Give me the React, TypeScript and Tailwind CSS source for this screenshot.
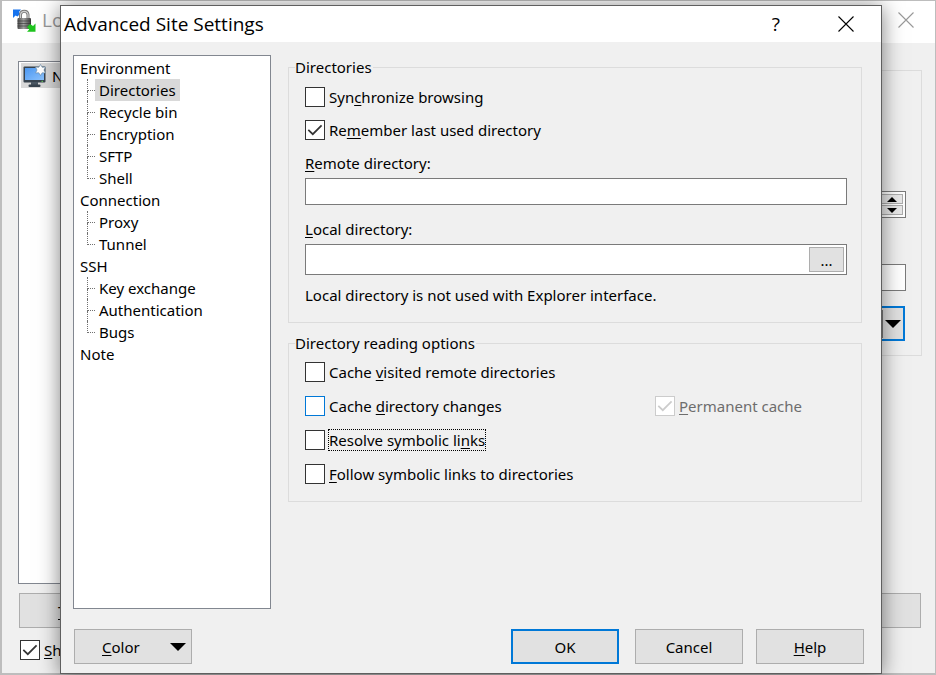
import React from 'react';

type TreeGroup = { name: string; children: string[] };

const TREE: TreeGroup[] = [
  { name: 'Environment', children: ['Directories', 'Recycle bin', 'Encryption', 'SFTP', 'Shell'] },
  { name: 'Connection', children: ['Proxy', 'Tunnel'] },
  { name: 'SSH', children: ['Key exchange', 'Authentication', 'Bugs'] },
  { name: 'Note', children: [] },
];

// "&" marks the accelerator letter, as in native dialog resources
const Accel: React.FC<{ text: string }> = ({ text }) => {
  const i = text.indexOf('&');
  if (i < 0) return <>{text}</>;
  return (
    <>
      {text.slice(0, i)}
      <u className="underline decoration-1 underline-offset-2 [text-decoration-skip-ink:none]">{text[i + 1]}</u>
      {text.slice(i + 2)}
    </>
  );
};

const Check: React.FC<{
  id: string;
  text: string;
  checked?: boolean;
  disabled?: boolean;
  hot?: boolean;
  focused?: boolean;
}> = ({ id, text, checked, disabled, hot, focused }) => (
  <div className="flex items-center gap-[3px]">
    <span className="relative size-5 shrink-0">
      <input
        id={id}
        type="checkbox"
        defaultChecked={checked}
        disabled={disabled}
        className={`peer block size-5 appearance-none border bg-white ${disabled ? 'border-[#cccccc]' : hot ? 'border-[#0078d7]' : 'border-[#333333]'}`}
      />
      <svg
        viewBox="0 0 20 20"
        className={`pointer-events-none absolute inset-0 hidden size-5 peer-checked:block ${disabled ? 'text-[#cccccc]' : 'text-[#333333]'}`}
      >
        <path d="M3.3 9.8 L7.8 14.2 L16.6 5.4" fill="none" stroke="currentColor" strokeWidth="1.7" />
      </svg>
    </span>
    <label
      htmlFor={id}
      className={`whitespace-nowrap border border-dotted leading-5 ${focused ? 'border-black' : 'border-transparent'} ${disabled ? 'text-[#6d6d6d]' : ''}`}
    >
      <Accel text={text} />
    </label>
  </div>
);

const Group: React.FC<{ title: string; children: React.ReactNode }> = ({ title, children }) => (
  <fieldset className="min-w-0 border border-[#dcdcdc] px-1.5">
    <legend className="pr-px leading-[22px]">{title}</legend>
    <div className="pl-2.5 pr-2">{children}</div>
  </fieldset>
);

const PushButton: React.FC<{ text: string; primary?: boolean }> = ({ text, primary }) => (
  <button
    type="button"
    className={`h-[35px] w-[108px] bg-[#e1e1e1] ${primary ? 'border-2 border-[#0078d7]' : 'border border-[#adadad]'}`}
  >
    <Accel text={text} />
  </button>
);

const Cross: React.FC<{ className: string }> = ({ className }) => (
  <svg viewBox="0 0 16 16" className={`size-4 ${className}`}>
    <path d="M0.5 0.5 L15.5 15.5 M15.5 0.5 L0.5 15.5" stroke="currentColor" strokeWidth="1.1" fill="none" />
  </svg>
);

const Triangle: React.FC<{ className: string; up?: boolean }> = ({ className, up }) => (
  <svg viewBox="0 0 16 8" preserveAspectRatio="none" className={className}>
    <path d={up ? 'M0 8 L8 0 L16 8 Z' : 'M0 0 H16 L8 8 Z'} fill="#000" />
  </svg>
);

const LockLogo: React.FC = () => (
  <svg viewBox="0 0 24 24" className="size-6">
    <defs>
      <linearGradient id="lockBody" x1="0" x2="1">
        <stop offset="0" stopColor="#4a4a4a" />
        <stop offset="0.45" stopColor="#a0a0a0" />
        <stop offset="1" stopColor="#3c3c3c" />
      </linearGradient>
    </defs>
    <path d="M1 1.5 H9 L7 4 L8 6 L5.5 8.5 L3.5 7.5 L1 10 Z" fill="#1673ee" />
    <path d="M8.5 11 V6.5 A3.8 3.8 0 0 1 16 6.5 V11" fill="none" stroke="#777" strokeWidth="3" />
    <path d="M8.5 11 V6.5 A3.8 3.8 0 0 1 16 6.5 V11" fill="none" stroke="#d0d0d0" strokeWidth="1.2" />
    <rect x="5.5" y="10" width="13.5" height="11" rx="1" fill="url(#lockBody)" />
    <path d="M5.5 13 H19 M5.5 15.5 H19 M5.5 18 H19" stroke="#333" strokeWidth="0.6" />
    <path d="M23.5 15.5 V23.8 H15 L17.2 21.5 L15 19 L18 16 L21 18 Z" fill="#1fc41f" />
  </svg>
);

const MonitorIcon: React.FC = () => (
  <svg viewBox="0 0 24 24" className="size-6 shrink-0">
    <defs>
      <linearGradient id="screen" x1="0" y1="0" x2="1" y2="1">
        <stop offset="0" stopColor="#4c97f0" />
        <stop offset="1" stopColor="#8cc4ff" />
      </linearGradient>
    </defs>
    <rect x="0.5" y="2.5" width="22" height="16" rx="1" fill="#38444f" />
    <rect x="2" y="4" width="19" height="12" fill="url(#screen)" />
    <rect x="8" y="18" width="7" height="3" fill="#4a5763" />
    <rect x="5.5" y="20.5" width="12" height="2.5" rx="1" fill="#38444f" />
    <rect x="18.5" y="16.8" width="1.5" height="1" fill="#6fdc5a" />
    <path
      d="M17.5 0.5 L19.2 3.2 L22.5 3 L21 6 L22.5 9 L19.2 8.8 L17.5 11.5 L15.8 8.8 L12.5 9 L14 6 L12.5 3 L15.8 3.2 Z"
      fill="#fff"
      stroke="#6b8fae"
      strokeWidth="0.7"
    />
  </svg>
);

const SettingsTree: React.FC = () => (
  <ul className="w-[198px] shrink-0 border border-[#828790] bg-white pl-1.5 pt-px leading-[22px]">
    {TREE.map(group => (
      <li key={group.name}>
        <span>{group.name}</span>
        <ul className="pl-[7px]">
          {group.children.map((name, i) => (
            <li key={name} className="flex h-[22px]">
              <span className="flex w-2 flex-col">
                <span className="h-3 border-b border-l border-dotted border-[#707070]" />
                {i < group.children.length - 1 && <span className="flex-1 border-l border-dotted border-[#707070]" />}
              </span>
              <span className={`px-1 ${name === 'Directories' ? 'bg-[#d9d9d9]' : ''}`}>{name}</span>
            </li>
          ))}
        </ul>
      </li>
    ))}
  </ul>
);

const LoginWindow: React.FC = () => (
  <div className="flex flex-1 flex-col bg-[#f0f0f0]">
    <div className="flex h-[42px] items-start justify-between bg-white pl-2.5 pr-[21px] pt-[7px]">
      <div className="flex items-center gap-1.5">
        <LockLogo />
        <span className="font-['Open_Sans',sans-serif] text-[19px] leading-6 text-[#999999]">Lo</span>
      </div>
      <button type="button" aria-label="Close login" className="pt-1">
        <Cross className="text-[#999999]" />
      </button>
    </div>

    <div className="flex flex-1 justify-between pl-4 pr-[13px] pt-[18px]">
      <div className="w-1/4 border border-[#828790] bg-white">
        <div className="ml-0.5 mt-px flex h-[25px] items-center gap-[5px] bg-[#d9d9d9] pl-0.5">
          <MonitorIcon />
          <span>N</span>
        </div>
      </div>
      <div className="mt-[9px] flex h-[286px] w-1/4 flex-col items-end border border-[#dcdcdc] pr-[15px] pt-[120px]">
        <div className="flex h-[27px] w-16 flex-col items-end gap-px border border-[#7a7a7a] bg-white p-0.5">
          <button type="button" aria-label="Increase" className="flex h-[11px] w-[22px] items-center justify-center border border-[#adadad] bg-[#e9e9e9]">
            <Triangle up className="h-[5px] w-2.5" />
          </button>
          <button type="button" aria-label="Decrease" className="flex h-[11px] w-[22px] items-center justify-center border border-[#adadad] bg-[#e9e9e9]">
            <Triangle className="h-[5px] w-2.5" />
          </button>
        </div>
        <input aria-label="Password" className="mt-[46px] h-[27px] w-24 border border-[#7a7a7a] bg-white" />
        <button
          type="button"
          aria-label="More options"
          className="mr-px mt-[15px] flex h-[35px] w-[60px] items-center justify-end border-2 border-[#0078d7] bg-[#e1e1e1]"
        >
          <span className="flex h-7 items-center border-l border-[#7a7a7a] pl-0.5 pr-0.5">
            <Triangle className="h-2 w-4" />
          </span>
        </button>
      </div>
    </div>

    <div className="flex justify-between pb-[11px] pl-[17px] pr-3.5 pt-[9px]">
      <button type="button" className="h-[35px] w-[108px] border border-[#adadad] bg-[#e1e1e1] pl-[38px] text-left">
        <Accel text="&T" />
      </button>
      <button type="button" aria-label="Close" className="h-[35px] w-[108px] border border-[#adadad] bg-[#e1e1e1]" />
    </div>
    <div className="pb-3 pl-[18px]">
      <Check id="show-login" text="&Sh" checked />
    </div>
  </div>
);

const AdvancedDialog: React.FC = () => (
  <div
    role="dialog"
    aria-labelledby="dialog-title"
    className="absolute bottom-px left-[60px] right-[54px] top-[5px] flex flex-col border border-[#5f5f5f] bg-[#f0f0f0] shadow-[0_2px_20px_rgba(0,0,0,0.5)]"
  >
    <div className="flex h-9 items-center justify-between bg-white pl-[3px] pr-[27px]">
      <h1 id="dialog-title" className="font-['Open_Sans',sans-serif] text-[19px] leading-6">Advanced Site Settings</h1>
      <div className="flex items-center gap-[58px]">
        <button type="button" aria-label="What's this" className="font-['Open_Sans',sans-serif] text-[19px] leading-6">?</button>
        <button type="button" aria-label="Close dialog">
          <Cross className="text-black" />
        </button>
      </div>
    </div>

    <div className="flex flex-1 gap-[17px] pl-3 pr-[19px] pt-[13px]">
      <SettingsTree />
      <div className="flex min-w-0 flex-1 flex-col gap-[9px] pt-px">
        <Group title="Directories">
          <div className="flex flex-col pb-4 pt-0.5">
            <div className="flex h-[33px] items-center">
              <Check id="sync" text="Syn&chronize browsing" />
            </div>
            <div className="flex h-[33px] items-center">
              <Check id="remember" text="Re&member last used directory" checked />
            </div>
            <label htmlFor="remote" className="mt-[3px] h-[29px] leading-7">
              <Accel text="&Remote directory:" />
            </label>
            <input id="remote" type="text" className="h-[27px] border border-[#7a7a7a] bg-white px-1" />
            <label htmlFor="local" className="mt-2.5 h-[29px] leading-7">
              <Accel text="&Local directory:" />
            </label>
            <div className="flex h-[31px] border border-[#7a7a7a] bg-white p-0.5">
              <input id="local" type="text" className="min-w-0 flex-1 px-1" />
              <button type="button" aria-label="Browse" className="w-[35px] border border-[#adadad] bg-[#e1e1e1] leading-5">
                ...
              </button>
            </div>
            <p className="mt-[9px] leading-[22px]">Local directory is not used with Explorer interface.</p>
          </div>
        </Group>

        <Group title="Directory reading options">
          <div className="grid auto-rows-[34px] grid-cols-[350px_1fr] items-center pb-2.5 pt-px">
            <div className="col-span-2">
              <Check id="cache-visited" text="Cache &visited remote directories" />
            </div>
            <Check id="cache-changes" text="Cache &directory changes" hot />
            <Check id="permanent" text="&Permanent cache" checked disabled />
            <div className="col-span-2">
              <Check id="resolve" text="Resolve symbolic li&nks" focused />
            </div>
            <div className="col-span-2">
              <Check id="follow" text="&Follow symbolic links to directories" />
            </div>
          </div>
        </Group>
      </div>
    </div>

    <div className="flex justify-between pb-[9px] pl-[13px] pr-[17px] pt-5">
      <button type="button" className="flex h-[35px] w-[118px] items-center justify-between border border-[#adadad] bg-[#e1e1e1] pl-[27px] pr-[5px]">
        <span><Accel text="&Color" /></span>
        <Triangle className="h-2 w-4" />
      </button>
      <div className="flex">
        <PushButton text="OK" primary />
        <div className="ml-4 mr-[13px]">
          <PushButton text="Cancel" />
        </div>
        <PushButton text="&Help" />
      </div>
    </div>
  </div>
);

export default function App() {
  return (
    <div className="relative flex min-h-screen flex-col bg-[#bdbdbd] pb-0.5 pl-0.5 pr-px pt-px font-['Noto_Sans',sans-serif] text-[15px] leading-[22px] text-black">
      <LoginWindow />
      <AdvancedDialog />
    </div>
  );
}
